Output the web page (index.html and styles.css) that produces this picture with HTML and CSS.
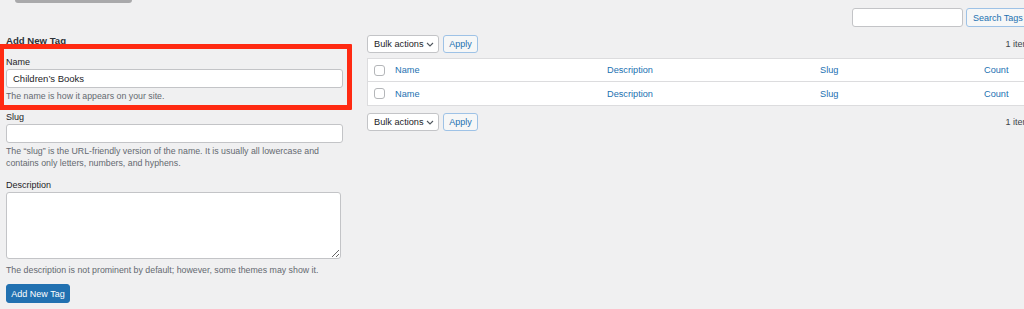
FILE: index.html
```html
<!DOCTYPE html>
<html lang="en">
<head>
    <meta charset="UTF-8">
    <meta name="viewport" content="width=device-width, initial-scale=1.0">
    <title>Tags</title>
    <link rel="stylesheet" href="styles.css">
</head>
<body>
    <div class="top-stub"></div>

    <div class="page">
        <div class="search-row">
            <input type="text" class="search-input">
            <button class="btn">Search Tags</button>
        </div>

        <div class="columns">
            <div class="col-left">
                <h2 class="form-title">Add New Tag</h2>

                <div class="form-field field-name marked">
                    <label>Name</label>
                    <input type="text" class="text-input" value="Children’s Books">
                    <p class="help">The name is how it appears on your site.</p>
                </div>

                <div class="form-field field-slug">
                    <label>Slug</label>
                    <input type="text" class="text-input">
                    <p class="help">The “slug” is the URL-friendly version of the name. It is usually all lowercase and contains only letters, numbers, and hyphens.</p>
                </div>

                <div class="form-field field-desc">
                    <label>Description</label>
                    <textarea class="text-area"></textarea>
                    <p class="help">The description is not prominent by default; however, some themes may show it.</p>
                </div>

                <button class="btn-primary">Add New Tag</button>
            </div>

            <div class="col-right">
                <div class="tablenav">
                    <div class="bulk">
                        <div class="select">Bulk actions
                            <svg width="8" height="5" viewBox="0 0 8 5"><polyline points="1,1 4,4 7,1" fill="none" stroke="#50575e" stroke-width="1.1"/></svg>
                        </div>
                        <button class="btn">Apply</button>
                    </div>
                    <span class="count-label">1 item</span>
                </div>

                <div class="list-table">
                    <div class="row head">
                        <span class="cb"><span class="check"></span></span>
                        <a>Name</a>
                        <a>Description</a>
                        <a>Slug</a>
                        <a>Count</a>
                    </div>
                    <div class="row">
                        <span class="cb"><span class="check"></span></span>
                        <a>Name</a>
                        <a>Description</a>
                        <a>Slug</a>
                        <a>Count</a>
                    </div>
                </div>

                <div class="tablenav bottom">
                    <div class="bulk">
                        <div class="select">Bulk actions
                            <svg width="8" height="5" viewBox="0 0 8 5"><polyline points="1,1 4,4 7,1" fill="none" stroke="#50575e" stroke-width="1.1"/></svg>
                        </div>
                        <button class="btn">Apply</button>
                    </div>
                    <span class="count-label">1 item</span>
                </div>
            </div>
        </div>
    </div>
</body>
</html>
```

FILE: styles.css
```css
* {
    margin: 0;
    padding: 0;
    box-sizing: border-box;
}

html, body {
    overflow: hidden;
}

body {
    background: #f0f0f1;
    color: #1d2327;
    font-family: "Liberation Sans", Arial, sans-serif;
    font-size: 9px;
    width: 1024px;
    height: 309px;
}

.top-stub {
    margin-left: 15px;
    width: 117px;
    height: 3px;
    background: #a9a9ab;
    border-radius: 0 0 3px 3px;
}

.page {
    width: 1030px;
    padding-left: 6px;
}

.search-row {
    display: flex;
    justify-content: flex-end;
    gap: 3px;
    margin-top: 5px;
    height: 19px;
}

.search-input {
    width: 111px;
    height: 19px;
    border: 1px solid #c3c4c7;
    border-radius: 3px;
    background: #fff;
}

.btn {
    height: 19px;
    padding: 0 6px;
    border: 1px solid #9ec2e6;
    border-radius: 3px;
    background: #f6f7f7;
    color: #2271b1;
    font-family: inherit;
    font-size: 9px;
    white-space: nowrap;
}

.search-row .btn {
    width: 64px;
    text-align: left;
}

.columns {
    display: flex;
    gap: 24px;
    margin-top: 8px;
}

/* left column: add form */
.col-left {
    width: 337px;
    flex: none;
}

.form-title {
    font-size: 9.6px;
    font-weight: bold;
    line-height: 12px;
    color: #2c3338;
}

.form-field {
    margin-top: 9px;
}

.form-field label {
    display: block;
    line-height: 12px;
    margin-bottom: 1px;
}

.text-input {
    display: block;
    width: 337px;
    height: 19px;
    padding: 0 6px;
    border: 1px solid #c3c4c7;
    border-radius: 3px;
    background: #fff;
    color: #1d2327;
    font-family: inherit;
    font-size: 9.5px;
}

.text-area {
    display: block;
    width: 335px;
    height: 67px;
    border: 1px solid #c3c4c7;
    border-radius: 3px;
    background: #fff;
    resize: vertical;
}

.help {
    margin-top: 2px;
    color: #646970;
    font-size: 8.8px;
    line-height: 12px;
}

.field-desc {
    margin-top: 10px;
}

.field-desc .help {
    margin-top: 5px;
}

.marked {
    position: relative;
}

.marked::after {
    content: "";
    position: absolute;
    top: -12px;
    bottom: -8px;
    left: -7px;
    right: -9px;
    border: 5px solid #ff2a12;
    border-radius: 1px;
    pointer-events: none;
}

.btn-primary {
    margin-top: 8px;
    height: 19px;
    width: 64px;
    border: 1px solid #2271b1;
    border-radius: 3px;
    background: #2271b1;
    color: #fff;
    font-family: inherit;
    font-size: 9px;
}

/* right column: list table */
.col-right {
    flex: 1;
}

.tablenav {
    display: flex;
    justify-content: space-between;
    align-items: center;
    height: 18px;
}

.tablenav.bottom {
    margin-top: 7px;
}

.bulk {
    display: flex;
    gap: 4px;
}

.bulk .btn {
    height: 18px;
    width: 35px;
    padding: 0;
}

.select {
    display: flex;
    align-items: center;
    justify-content: space-between;
    width: 72px;
    height: 18px;
    padding: 0 4px 0 6px;
    border: 1px solid #c3c4c7;
    border-radius: 3px;
    background: #fff;
    font-size: 9.2px;
}

.count-label {
    color: #3c434a;
    font-size: 9px;
    white-space: nowrap;
}

.list-table {
    margin-top: 5px;
    border: 1px solid #dcdcde;
    background: #fff;
}

.row {
    display: grid;
    grid-template-columns: 27px 212px 213px 164px 1fr;
    align-items: center;
    height: 23px;
}

.row.head {
    border-bottom: 1px solid #dcdcde;
}

.row a {
    color: #2271b1;
    font-size: 9.2px;
}

.cb {
    padding-left: 6px;
    display: flex;
}

.check {
    width: 11px;
    height: 11px;
    border: 1px solid #b4b6b9;
    border-radius: 3px;
    background: #fff;
}
```
